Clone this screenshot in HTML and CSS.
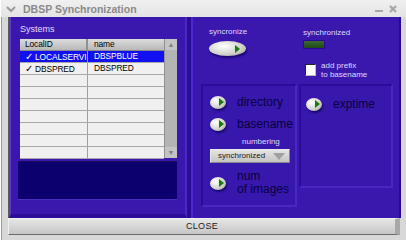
FILE: index.html
```html
<!DOCTYPE html>
<html lang="en">
<head>
    <meta charset="UTF-8">
    <title>DBSP Synchronization</title>
    <link rel="stylesheet" href="styles.css">
</head>
<body>
    <div class="window">
        <div class="titlebar">
            <svg class="chevron" width="10" height="8" viewBox="0 0 10 8"><path d="M1 2 L5 6 L9 2" fill="none" stroke="#9a9a9a" stroke-width="2"/></svg>
            <span class="title">DBSP Synchronization</span>
            <svg class="winbtn" width="10" height="10" viewBox="0 0 10 10"><rect x="1" y="6" width="8" height="2" fill="#a8a8a8"/></svg>
            <svg class="winbtn" width="10" height="10" viewBox="0 0 10 10"><path d="M2 2 L8 8 M8 2 L2 8" stroke="#a8a8a8" stroke-width="2.4"/></svg>
        </div>
        <div class="frame">
            <div class="content">
                <div class="left-panel">
                    <div class="caption">Systems</div>
                    <div class="table">
                        <div class="grid">
                            <div class="row head">
                                <div class="cell c1">LocalID</div>
                                <div class="cell c2">name</div>
                            </div>
                            <div class="row sel">
                                <div class="cell c1"><span class="check">✓</span>LOCALSERVI</div>
                                <div class="cell c2">DBSPBLUE</div>
                            </div>
                            <div class="row">
                                <div class="cell c1"><span class="check">✓</span>DBSPRED</div>
                                <div class="cell c2">DBSPRED</div>
                            </div>
                            <div class="row"><div class="cell c1"></div><div class="cell c2"></div></div>
                            <div class="row"><div class="cell c1"></div><div class="cell c2"></div></div>
                            <div class="row"><div class="cell c1"></div><div class="cell c2"></div></div>
                            <div class="row"><div class="cell c1"></div><div class="cell c2"></div></div>
                            <div class="row"><div class="cell c1"></div><div class="cell c2"></div></div>
                            <div class="row"><div class="cell c1"></div><div class="cell c2"></div></div>
                            <div class="row"><div class="cell c1"></div><div class="cell c2"></div></div>
                        </div>
                        <div class="scrollbar">
                            <div class="arrow">&#9650;</div>
                            <div class="arrow">&#9660;</div>
                        </div>
                    </div>
                    <div class="log"></div>
                </div>
                <div class="right-panel">
                    <div class="top">
                        <div class="sync-col">
                            <div class="small">syncronize</div>
                            <div class="pill"><span class="tri"></span></div>
                        </div>
                        <div class="status-col">
                            <div class="small">synchronized</div>
                            <div class="led"></div>
                            <div class="prefix">
                                <div class="checkbox"></div>
                                <div class="small">add prefix<br>to basename</div>
                            </div>
                        </div>
                    </div>
                    <div class="boxes">
                        <div class="box box-left">
                            <div class="opt"><span class="radio"><span class="tri"></span></span>directory</div>
                            <div class="opt"><span class="radio"><span class="tri"></span></span>basename</div>
                            <div class="small numbering">numbering</div>
                            <div class="select">synchronized<span class="down"></span></div>
                            <div class="opt two"><span class="radio"><span class="tri"></span></span><span>num<br>of images</span></div>
                        </div>
                        <div class="box box-right">
                            <div class="opt"><span class="radio"><span class="tri"></span></span>exptime</div>
                        </div>
                    </div>
                </div>
            </div>
            <div class="close">CLOSE</div>
        </div>
    </div>
</body>
</html>
```

FILE: styles.css
```css
body {
    margin: 0;
    width: 406px;
    height: 240px;
    overflow: hidden;
    background-color: #d4d4d4;
    font-family: "Liberation Sans", Arial, sans-serif;
}
.window {
    height: 240px;
    display: flex;
    flex-direction: column;
    box-sizing: border-box;
    border-left: 1px solid #ffffff;
}
.titlebar {
    height: 17px;
    display: flex;
    align-items: center;
    padding: 0 8px 0 5px;
    background: linear-gradient(#f0f0f0, #e4e4e4);
    box-sizing: border-box;
}
.chevron {
    margin-right: 7px;
}
.title {
    flex: 1;
    font-size: 10.5px;
    font-weight: bold;
    color: #8a8a8a;
}
.winbtn {
    margin-left: 4px;
}
.frame {
    flex: 1;
    display: flex;
    flex-direction: column;
    padding: 0 6px 5px 6px;
    border-left: 1px solid #9a9a9a;
    background-color: #d8d8d8;
}
.content {
    flex: 1;
    display: flex;
    background-color: #2a0c96;
    border-left: 1px solid #5a5a5a;
}
.left-panel {
    width: 178px;
    padding: 7px 9px 0 9px;
    background-color: #3a18ae;
    border-left: 2px solid #5a3ad0;
    border-right: 2px solid #4a2ac4;
    border-bottom: 4px solid #2c0c98;
    box-sizing: border-box;
    margin-right: 4px;
}
.caption {
    font-size: 9px;
    color: #e0dcff;
    height: 15px;
}
.table {
    display: flex;
    width: 157px;
    height: 119px;
    background-color: #f0f0f0;
}
.grid {
    flex: 1;
}
.row {
    display: flex;
    height: 11px;
    border-bottom: 1px solid #a8a8a8;
    background-color: #f0f0f0;
    font-size: 8.4px;
    line-height: 11px;
    letter-spacing: -0.1px;
    color: #000;
}
.row.head {
    height: 11px;
    background: linear-gradient(#dcdcdc, #b8b8b8);
    border-bottom: 1px solid #888;
}
.row.sel {
    background-color: #1010f0;
    color: #fff;
}
.cell {
    overflow: hidden;
    white-space: nowrap;
    box-sizing: border-box;
    padding-left: 5px;
}
.c1 {
    width: 68px;
    border-right: 1px solid #a0a0a0;
}
.c2 {
    flex: 1;
    padding-left: 6px;
}
.head .c1 {
    border-right: 2px solid #909090;
}
.check {
    display: inline-block;
    width: 10px;
    font-size: 10px;
}
.scrollbar {
    width: 12px;
    background-color: #b4b4b4;
    border-left: 1px solid #909090;
    display: flex;
    flex-direction: column;
    justify-content: space-between;
}
.arrow {
    height: 11px;
    font-size: 7px;
    line-height: 11px;
    text-align: center;
    color: #808080;
    background-color: #c4c4c4;
}
.log {
    height: 37px;
    margin: 3px -1px 0 -2px;
    background-color: #0c006e;
    border-top: 1px solid #1a0a60;
    border-bottom: 1px solid #4a30c0;
}
.right-panel {
    flex: 1;
    padding: 10px 6px 10px 10px;
    background-color: #3a18ae;
    border-left: 2px solid #4a2acc;
    border-right: 2px solid #2a0a90;
    display: flex;
    flex-direction: column;
}
.small {
    font-size: 8px;
    color: #dcd8ff;
    line-height: 9px;
}
.top {
    display: flex;
    height: 57px;
}
.sync-col {
    width: 94px;
    padding-left: 6px;
}
.pill {
    width: 37px;
    height: 15px;
    margin-top: 5px;
    border-radius: 50%;
    background: radial-gradient(ellipse at 40% 35%, #ffffff, #d0d0c8 60%, #8a8a80);
    box-shadow: 1px 2px 2px #1a0870;
    display: flex;
    align-items: center;
    justify-content: flex-end;
    padding-right: 6px;
    box-sizing: border-box;
}
.tri {
    width: 0;
    height: 0;
    border-top: 4px solid transparent;
    border-bottom: 4px solid transparent;
    border-left: 5px solid #1a7a10;
}
.status-col {
    padding-top: 1px;
}
.led {
    width: 20px;
    height: 7px;
    margin: 3px 0 0 0;
    background: linear-gradient(#3a6a30, #204818);
    border: 1px solid #2a0a90;
}
.prefix {
    display: flex;
    gap: 5px;
    margin-top: 12px;
    padding-left: 2px;
}
.checkbox {
    width: 9px;
    height: 10px;
    margin-top: 3px;
    background-color: #fff;
    border: 1px solid #222;
    border-right-color: #bbb;
    border-bottom-color: #bbb;
}
.boxes {
    display: flex;
    gap: 2px;
    align-items: flex-start;
    margin-left: -2px;
}
.box {
    background-color: #3818ac;
    border-top: 2px solid #2c0c98;
    border-left: 2px solid #2c0c98;
    border-right: 2px solid #4828c0;
    border-bottom: 2px solid #4828c0;
    box-sizing: border-box;
}
.box-left {
    width: 96px;
    height: 123px;
    padding: 5px 0 0 7px;
}
.box-right {
    width: 94px;
    height: 104px;
    padding: 7px 0 0 5px;
}
.opt {
    display: flex;
    align-items: center;
    gap: 11px;
    font-size: 12px;
    color: #080040;
    height: 22px;
}
.opt.two {
    height: 28px;
    line-height: 13px;
    margin-top: 6px;
}
.radio {
    width: 16px;
    height: 13px;
    border-radius: 50%;
    background: radial-gradient(ellipse at 35% 35%, #ffffff, #d0d0c8 60%, #7a7a70);
    box-shadow: 1px 2px 2px #1a0870;
    display: flex;
    align-items: center;
    justify-content: flex-end;
    padding-right: 2px;
    box-sizing: border-box;
    flex-shrink: 0;
}
.numbering {
    margin: 2px 0 0 32px;
}
.select {
    width: 80px;
    height: 14px;
    margin-top: 3px;
    box-sizing: border-box;
    background: linear-gradient(#e4e4e4, #c4c4c4);
    border: 1px solid #e8e8e8;
    border-right-color: #888;
    border-bottom-color: #888;
    font-size: 8px;
    line-height: 12px;
    padding-left: 7px;
    color: #202020;
    display: flex;
    align-items: center;
    justify-content: space-between;
    padding-right: 4px;
}
.down {
    width: 0;
    height: 0;
    border-left: 6px solid transparent;
    border-right: 6px solid transparent;
    border-top: 7px solid #a0a0a0;
}
.close {
    height: 15px;
    margin-top: 0;
    background: linear-gradient(#e6e6e6, #c6c6c6);
    border: 1px solid #f0f0f0;
    border-right: 5px solid #a8a8a8;
    border-bottom: 1px solid #6a6a6a;
    font-size: 9px;
    line-height: 15px;
    text-align: center;
    color: #202020;
    letter-spacing: 0.3px;
}
```
